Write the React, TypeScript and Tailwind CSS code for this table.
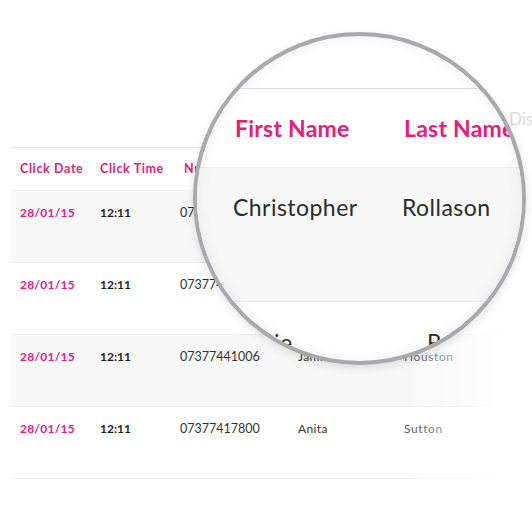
import React from 'react';

const rows = [
  { date: '28/01/15', time: '12:11', number: '07377441006', first: 'Christopher', last: 'Rollason', shade: true },
  { date: '28/01/15', time: '12:11', number: '07377417800', first: 'Jamie', last: 'Reynolds', shade: false },
  { date: '28/01/15', time: '12:11', number: '07377441006', first: 'Jamie', last: 'Houston', shade: true },
  { date: '28/01/15', time: '12:11', number: '07377417800', first: 'Anita', last: 'Sutton', shade: false },
];

const cols = 'grid grid-cols-[80px_84px_119px_101px_1fr]';
const lensCols = 'grid grid-cols-[207px_1fr]';

export default function App() {
  return (
    <div className="relative w-[532px] h-[505px] overflow-hidden bg-white font-['Lato','Open_Sans',sans-serif]">
      {/* base table */}
      <div className="ml-[11px] mt-[147px] w-[498px] border-t border-[#e2e3e4]">
        <div className={`${cols} h-[43px] items-center border-b border-[#eeefef] text-[12.5px] font-bold tracking-[0.05em] text-[#ec1b79]`}>
          <div className="pl-[9px]">Click Date</div>
          <div className="pl-[9px]">Click Time</div>
          <div className="pl-[9px]">Number</div>
          <div className="pl-[9px]">First Name</div>
          <div className="pl-[9px]">Last Name</div>
        </div>
        {rows.map((r, i) => (
          <div
            key={i}
            className={`${cols} h-[72px] border-b border-[#eeefef] pt-4 text-[12px] leading-[12px] ${r.shade ? 'bg-[#f7f8f8]' : 'bg-white'}`}
          >
            <div className="pl-[9px] font-bold tracking-[0.02em] text-[#ec1b79]">{r.date}</div>
            <div className="pl-[9px] font-bold text-[#222]">{r.time}</div>
            <div className="pl-[5px] text-[12.5px] text-[#333]">{r.number}</div>
            <div className="pl-[4px] tracking-[0.03em] text-[#333]">{r.first}</div>
            <div className="pl-[9px] tracking-[0.05em] text-[#555]">{r.last}</div>
          </div>
        ))}
      </div>

      {/* right side fade */}
      <div className="absolute left-[405px] top-[148px] h-[340px] w-[127px] flex">
        <div className="w-[110px] bg-linear-to-r from-white/0 to-white" />
        <div className="flex-1 bg-white" />
      </div>

      {/* faint magnified header outside the lens */}
      <div className="absolute left-[509px] top-[106px] text-[17px] text-[#d9d9d9]">Display</div>

      {/* magnifier lens */}
      <div className="absolute left-[193px] top-[32px] size-[333px] rounded-full border-4 border-[#a8a9ac] bg-white overflow-hidden shadow-[0_3px_10px_rgba(0,0,0,0.12)]">
        <div className="relative h-full w-full">
          <div className="h-[52px]" />
          <div className="border-t border-[#dcdddf]" />
          <div className={`${lensCols} h-[79px] items-center border-b border-[#ebecec] text-[23px] font-bold tracking-[0.01em] text-[#ec1b79]`}>
            <div className="pl-[38px] whitespace-nowrap">First Name</div>
            <div className="whitespace-nowrap">Last Name</div>
          </div>
          <div className={`${lensCols} h-[133px] bg-[#f7f8f8] pt-[28px] text-[23px] leading-[23px] tracking-[0.02em] text-[#2b2b2b]`}>
            <div className="pl-[36px]">Christopher</div>
            <div className="-ml-[2px]">Rollason</div>
          </div>
          <div className="border-t border-[#ebecec]" />
          <div className={`${lensCols} pt-[29px] text-[23px] leading-[23px] tracking-[0.02em] text-[#2b2b2b]`}>
            <div className="pl-[36px]">Jamie</div>
            <div className="pl-[23px]">Reynolds</div>
          </div>
          {/* inner glass shading */}
          <div className="pointer-events-none absolute inset-0 rounded-full shadow-[inset_0_0_14px_rgba(0,0,0,0.08)]" />
        </div>
      </div>
    </div>
  );
}
